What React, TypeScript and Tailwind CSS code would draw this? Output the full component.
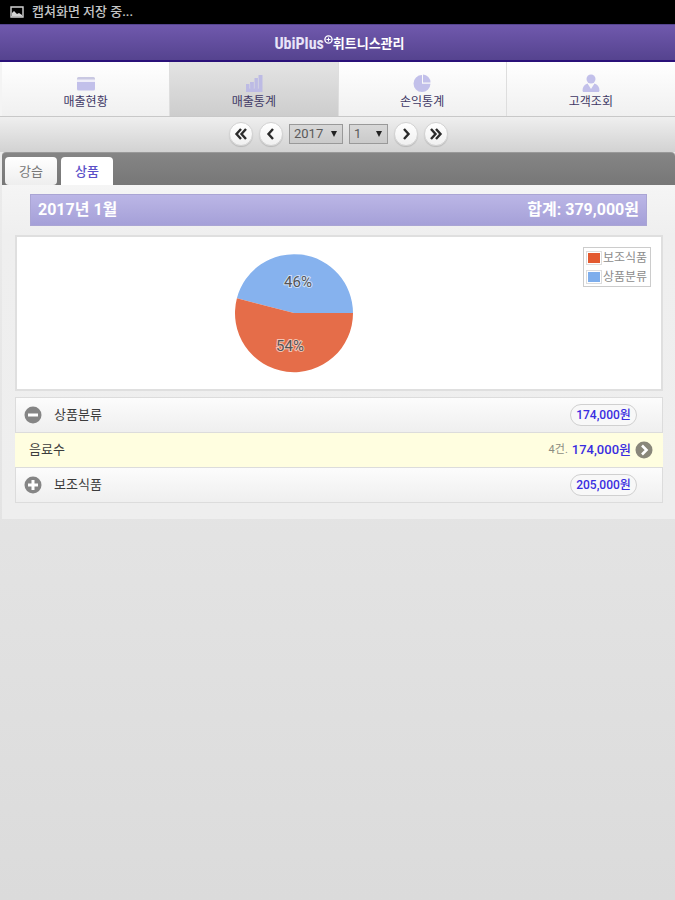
import { useState, type ReactNode } from "react";

const font = "font-['Roboto','Noto_Sans_CJK_KR',sans-serif]";

function CardIcon() {
  return (
    <svg width="18" height="18" viewBox="0 0 18 18" className="fill-[#c2c0ea]" aria-hidden="true">
      <path d="M1.500 3h15A1.500 1.500 0 0 1 18 4.500V6H0V4.500A1.500 1.500 0 0 1 1.500 3Z" fill="#c9c8e2" />
      <path d="M0 8h18v7a1.500 1.500 0 0 1-1.500 1.500h-15A1.500 1.500 0 0 1 0 15Z" />
      <path d="M0 5.500h18V8H0Z" fill="#efeef9" />
    </svg>
  );
}

function BarsIcon() {
  return (
    <svg width="18" height="18" viewBox="0 0 18 18" className="fill-[#bdbbe4]" aria-hidden="true">
      <path d="M1 10h3.500v8H1ZM5 8h4v10H5ZM9.500 4H13V18H9.500ZM13.500 1h4v17h-4Z" />
      <path d="M1 14h16v4H1Z" />
      <path d="M4.800 10v5M9.200 8v7M13.300 4v11" stroke="#d2d1e6" strokeWidth="0.600" />
    </svg>
  );
}

function PieIcon() {
  return (
    <svg width="18" height="18" viewBox="0 0 18 18" className="fill-[#c2c0ea]" aria-hidden="true">
      <path d="M9 1A8.500 8.500 0 1 0 17.500 9.800H9Z" />
      <path d="M10 0.500A8 8 0 0 1 17.500 8.500H10Z" />
    </svg>
  );
}

function PersonIcon() {
  return (
    <svg width="18" height="18" viewBox="0 0 18 18" className="fill-[#c2c0ea]" aria-hidden="true">
      <circle cx="9" cy="5" r="4.500" />
      <path d="M5.500 9.500 9 15l3.500-5.500C15.500 10.500 17.500 13 17.500 16.500c0 .8-.5 1.500-1.300 1.500H1.800C1 18 .5 17.300.5 16.500.5 13 2.500 10.500 5.500 9.500Z" />
    </svg>
  );
}

const navItems: { label: string; icon: ReactNode }[] = [
  { label: "매출현황", icon: <CardIcon /> },
  { label: "매출통계", icon: <BarsIcon /> },
  { label: "손익통계", icon: <PieIcon /> },
  { label: "고객조회", icon: <PersonIcon /> },
];

function RoundButton({ label, path }: { label: string; path: string }) {
  return (
    <button
      type="button"
      aria-label={label}
      className="flex size-6 items-center justify-center rounded-full border border-[#d2d2d2] bg-linear-to-b from-white to-[#f0f0f0] shadow-[0_1px_1px_rgba(0,0,0,0.15)]"
    >
      <svg width="14" height="14" viewBox="0 0 14 14" fill="none" stroke="#2a2a2a" strokeWidth="2.400">
        <path d={path} />
      </svg>
    </button>
  );
}

type PickerProps = {
  label: string;
  value: string;
  options: string[];
  width: string;
  onChange: (value: string) => void;
};

function Picker({ label, value, options, width, onChange }: PickerProps) {
  return (
    <span className={`relative flex ${width}`}>
      <select
        aria-label={label}
        value={value}
        onChange={(e) => onChange(e.target.value)}
        className="h-5 w-full appearance-none border border-[#999] bg-linear-to-b from-[#d8d8d8] to-[#cacaca] pl-1 text-[13px] leading-none text-[#5a5a5a]"
      >
        {options.map((option) => (
          <option key={option}>{option}</option>
        ))}
      </select>
      <svg className="pointer-events-none absolute top-[7px] right-1.5" width="6" height="6" viewBox="0 0 6 6">
        <path d="M0 0h6L3 6Z" fill="#222" />
      </svg>
    </span>
  );
}

function GroupRow({ name, amount, open, onToggle }: { name: string; amount: string; open: boolean; onToggle: () => void }) {
  return (
    <button
      type="button"
      aria-expanded={open}
      onClick={onToggle}
      className="flex h-9 w-full items-center border border-[#dcdcdc] bg-linear-to-b from-[#fcfcfc] to-[#efefef] pr-[25px] pl-2 text-left"
    >
      <svg width="18" height="18" viewBox="0 0 18 18" aria-hidden="true">
        <circle cx="9" cy="9" r="8.500" fill="#858585" />
        <path d={open ? "M4 7.500h10v3H4Z" : "M7.500 4h3v3.500H14v3h-3.500V14h-3v-3.500H4v-3h3.500Z"} fill="#fff" />
      </svg>
      <span className="ml-3 flex-1 text-[13px] text-[#3c3c3c]">{name}</span>
      <span className="flex h-[22px] w-[67px] items-center justify-center rounded-full border border-[#d0d0d0] bg-[#f8f8f8] text-xs font-medium text-[#3a2de0]">
        {amount}
      </span>
    </button>
  );
}

function Legend() {
  const entries = [
    { name: "보조식품", color: "bg-[#e35a30]" },
    { name: "상품분류", color: "bg-[#7eaeec]" },
  ];
  return (
    <ul className="flex w-[68px] flex-col border border-[#ccc] text-xs text-[#8c8c8c]">
      {entries.map((entry) => (
        <li key={entry.name} className="flex h-[19px] items-center gap-px whitespace-nowrap pl-0.5">
          <span className="border border-[#ddd] p-px">
            <span className={`block h-2.5 w-3 ${entry.color}`} />
          </span>
          {entry.name}
        </li>
      ))}
    </ul>
  );
}

function PieChart() {
  return (
    <svg width="120" height="120" viewBox="-60 -60 120 120" role="img" aria-label="상품별 매출 비율">
      <path d="M0 0H59A59 59 0 0 0-57.100-14.700Z" fill="#86b2ee" />
      <path d="M0 0H59A59 59 0 1 1-57.100-14.700Z" fill="#e56d49" />
      <g
        className="text-[15px]"
        fill="#555"
        stroke="#fff"
        strokeOpacity="0.6"
        strokeWidth="2"
        paintOrder="stroke"
        textAnchor="middle"
      >
        <text x="4" y="-26">46%</text>
        <text x="-4" y="38">54%</text>
      </g>
    </svg>
  );
}

export default function App() {
  const [nav, setNav] = useState(1);
  const [tab, setTab] = useState("상품");
  const [year, setYear] = useState("2017");
  const [month, setMonth] = useState("1");
  const [openFirst, setOpenFirst] = useState(true);
  const [openSecond, setOpenSecond] = useState(false);

  return (
    <div className={`flex min-h-screen flex-col bg-linear-to-b from-[#efefef] to-[#dbdbdb] ${font}`}>
      <div className="flex h-6 items-center gap-2 bg-black pl-2.5 text-[13px] font-medium text-[#c4c4c4]">
        <svg width="14" height="14" viewBox="0 0 14 14" aria-hidden="true">
          <path d="M1 2h12v10H1Z" fill="none" stroke="#d4d4d4" strokeWidth="1.400" />
          <path d="M2 8l2-2 3 3 2-1 3 2v1.500H2Z" fill="#d4d4d4" />
        </svg>
        <span>캡쳐화면 저장 중...</span>
      </div>

      <header className="flex h-[38px] items-center justify-center border-t border-b-2 border-t-[#55448f] border-b-[#2a1179] bg-linear-to-b from-[#7059ad] to-[#55438f] text-white">
        <h1 className="flex items-center pt-0.5 pl-1">
          <span className="font-['Liberation_Sans_Narrow','Roboto_Condensed','Roboto',sans-serif] text-base font-bold text-[#e8e4f8]">
            UbiPlus
          </span>
          <svg className="mb-2" width="9" height="9" viewBox="0 0 9 9" aria-hidden="true">
            <circle cx="4.500" cy="4.500" r="3.600" fill="none" stroke="#fff" strokeWidth="1.400" />
            <path d="M4.500 2.500v4M2.500 4.500h4" stroke="#fff" />
          </svg>
          <span className="text-[13px] font-bold">휘트니스관리</span>
        </h1>
      </header>

      <nav className="grid h-[54px] grid-cols-4 bg-[#f4f4f4] pl-0.5">
        {navItems.map((item, i) => (
          <button
            key={item.label}
            type="button"
            onClick={() => setNav(i)}
            className={`flex flex-col items-center justify-center gap-px border-r border-[#dedede] bg-linear-to-b pt-1.5 text-xs text-[#3f3865] last:border-r-0 ${
              nav === i ? "from-[#e4e4e4] to-[#cdcdcd]" : "from-white to-[#f0f0f0]"
            }`}
          >
            {item.icon}
            <span className="leading-[18px]">{item.label}</span>
          </button>
        ))}
      </nav>

      <div className="flex h-9 items-center justify-center gap-1.5 border-t border-[#c8c8c8] bg-linear-to-b from-[#efefef] to-[#d2d2d2] pb-0.5 pl-0.5">
        <RoundButton label="이전 해" path="M7 2 2.500 7 7 12M12 2 7.500 7 12 12" />
        <RoundButton label="이전 달" path="M9 2 4.500 7 9 12" />
        <Picker label="년" value={year} options={["2016", "2017", "2018"]} width="w-[54px]" onChange={setYear} />
        <Picker
          label="월"
          value={month}
          options={["1", "2", "3", "4", "5", "6", "7", "8", "9", "10", "11", "12"]}
          width="w-[39px]"
          onChange={setMonth}
        />
        <RoundButton label="다음 달" path="M5 2 9.500 7 5 12" />
        <RoundButton label="다음 해" path="M2 2 6.500 7 2 12M7 2 11.500 7 7 12" />
      </div>

      <div className="ml-0.5 flex h-[33px] items-end gap-1 rounded-t border-t border-[#999] bg-linear-to-b from-[#858585] to-[#777] pl-[3px]">
        {["강습", "상품"].map((name) => (
          <button
            key={name}
            type="button"
            onClick={() => setTab(name)}
            className={`h-7 w-[52px] rounded-t pt-0.5 text-[13px] ${
              tab === name
                ? "bg-white font-medium text-[#5b50c8]"
                : "rounded-b bg-linear-to-b from-white to-[#eee] text-[#777]"
            }`}
          >
            {name}
          </button>
        ))}
      </div>

      <main className="ml-0.5 flex flex-col bg-linear-to-b from-[#f5f5f5] via-[#efefef] via-15% to-[#eee] pt-[9px] pr-3 pb-4 pl-[13px]">
        <div className="mr-4 ml-[15px] flex h-8 items-center justify-between border border-[#aaa5d4] bg-linear-to-b from-[#bbb6e6] to-[#a5a0d8] px-[7px] text-base font-bold text-white">
          <h2>2017년 1월</h2>
          <span>합계: 379,000원</span>
        </div>

        <section className="mt-[9px] flex h-[156px] border-2 border-[#dfdfdf] bg-white">
          <div className="flex flex-1 items-center justify-center">
            <PieChart />
          </div>
          <div className="w-[90px] pt-2.5 pl-3">
            <Legend />
          </div>
        </section>

        <section className="mt-1.5 flex flex-col">
          <GroupRow name="상품분류" amount="174,000원" open={openFirst} onToggle={() => setOpenFirst(!openFirst)} />
          {openFirst && (
            <a href="#detail" className="flex h-[34px] items-center bg-[#fffee0] pr-2.5 pl-3.5">
              <span className="flex-1 text-[13px] text-[#3c3c3c]">음료수</span>
              <span className="text-[11px] text-[#8c8c80]">4건.</span>
              <span className="mr-1 ml-1 text-[13px] font-medium text-[#3a2de0]">174,000원</span>
              <svg width="18" height="18" viewBox="0 0 18 18" aria-hidden="true">
                <circle cx="9" cy="9" r="8.500" fill="#89877a" />
                <path d="M7 4.500 11.500 9 7 13.500" fill="none" stroke="#fff" strokeWidth="2.600" />
              </svg>
            </a>
          )}
          <GroupRow name="보조식품" amount="205,000원" open={openSecond} onToggle={() => setOpenSecond(!openSecond)} />
        </section>
      </main>
    </div>
  );
}
